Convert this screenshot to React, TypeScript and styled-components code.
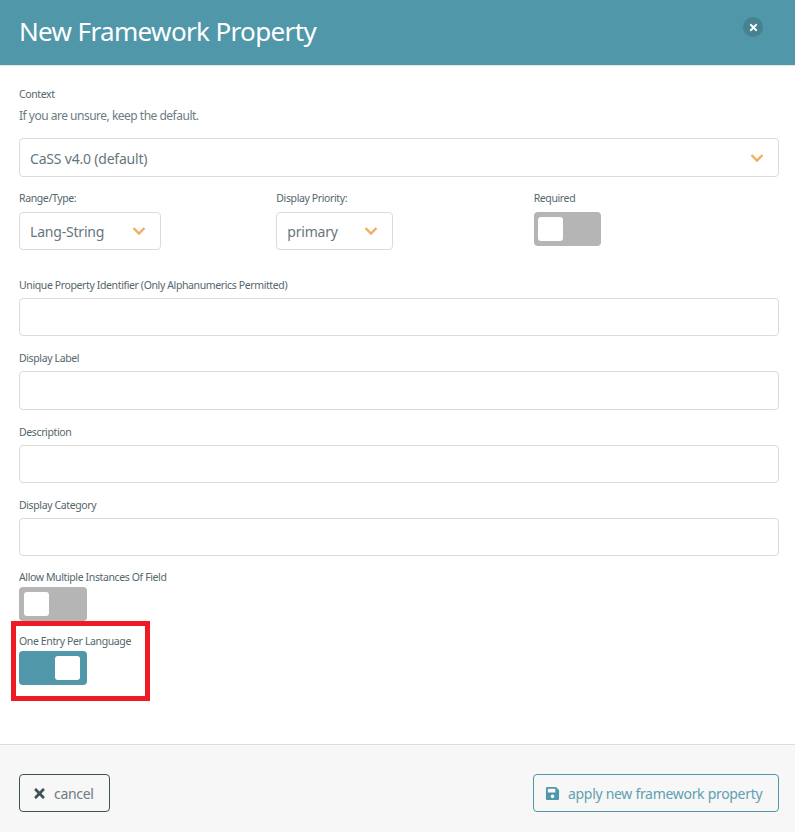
import styled, { createGlobalStyle } from 'styled-components'
import { FaTimes, FaSave } from 'react-icons/fa'

const GlobalStyle = createGlobalStyle`
  html, body {
    margin: 0;
    padding: 0;
    background: #ffffff;
  }
  * {
    box-sizing: border-box;
  }
`

const Chevron = () => (
  <ChevronIcon viewBox="0 0 14 10" aria-hidden="true">
    <polyline points="1.5,2 7,7.5 12.5,2" />
  </ChevronIcon>
)

const Toggle = ({ on = false }: { on?: boolean }) => (
  <Switch $on={on}>
    <Knob />
  </Switch>
)

const textFields = [
  'Unique Property Identifier (Only Alphanumerics Permitted)',
  'Display Label',
  'Description',
  'Display Category',
]

export default function App() {
  return (
    <Modal>
      <GlobalStyle />
      <Header>
        <Title>New Framework Property</Title>
        <CloseButton>
          <FaTimes />
        </CloseButton>
      </Header>
      <Body>
        <Label>Context</Label>
        <Help>If you are unsure, keep the default.</Help>
        <WideSelect>
          <span>CaSS v4.0 (default)</span>
          <Chevron />
        </WideSelect>
        <Columns>
          <div>
            <Label>Range/Type:</Label>
            <Select $width={142}>
              <span>Lang-String</span>
              <Chevron />
            </Select>
          </div>
          <div>
            <Label>Display Priority:</Label>
            <Select $width={117}>
              <span>primary</span>
              <Chevron />
            </Select>
          </div>
          <div>
            <Label>Required</Label>
            <Toggle />
          </div>
        </Columns>
        {textFields.map((name) => (
          <Field key={name}>
            <Label>{name}</Label>
            <Input />
          </Field>
        ))}
        <Toggles>
          <ToggleField>
            <Label>Allow Multiple Instances Of Field</Label>
            <Toggle />
          </ToggleField>
          <ToggleField>
            <Label>One Entry Per Language</Label>
            <Toggle on />
            <Highlight />
          </ToggleField>
        </Toggles>
      </Body>
      <Footer>
        <CancelButton>
          <FaTimes />
          <span>cancel</span>
        </CancelButton>
        <ApplyButton>
          <FaSave />
          <span>apply new framework property</span>
        </ApplyButton>
      </Footer>
    </Modal>
  )
}

const Modal = styled.div`
  width: 795px;
  height: 832px;
  display: flex;
  flex-direction: column;
  overflow: hidden;
  font-family: 'Noto Sans', 'Open Sans', sans-serif;
  color: #55666c;
  background: #ffffff;
`

const Header = styled.header`
  height: 66px;
  flex: none;
  display: flex;
  align-items: flex-start;
  justify-content: space-between;
  padding: 0 32px 0 19px;
  background: #5097a9;
  border-bottom: 1px solid #e4e8e9;
`

const Title = styled.h1`
  margin: 13px 0 0;
  font-size: 26px;
  line-height: 36px;
  font-weight: 400;
  letter-spacing: -0.64px;
  color: #ffffff;
`

const CloseButton = styled.div`
  width: 20px;
  height: 20px;
  margin-top: 17px;
  display: flex;
  align-items: center;
  justify-content: center;
  border-radius: 50%;
  background: #46828f;
  color: #ffffff;
  font-size: 11px;
`

const Body = styled.main`
  flex: 1;
  padding: 20px 16px 0 19px;
`

const Label = styled.label`
  display: block;
  height: 16px;
  margin-bottom: 5px;
  font-size: 10.5px;
  line-height: 16px;
  letter-spacing: -0.38px;
  white-space: nowrap;
  color: #55666c;
`

const Help = styled.p`
  height: 18px;
  margin: 0 0 13px;
  font-size: 12px;
  line-height: 18px;
  letter-spacing: -0.5px;
  color: #6d7c82;
`

const Select = styled.div<{ $width: number }>`
  display: inline-flex;
  align-items: center;
  justify-content: space-between;
  width: ${(p) => p.$width}px;
  height: 38px;
  padding: 0 14px 0 10px;
  background: #ffffff;
  border: 1px solid #dbdbdb;
  border-radius: 4px;
  font-size: 14px;
  letter-spacing: -0.2px;
  color: #66767c;
`

const WideSelect = styled(Select).attrs({ $width: 760 })`
  display: flex;
  height: 39px;
  padding-top: 1px;
`

const ChevronIcon = styled.svg`
  width: 14px;
  height: 10px;
  flex: none;

  polyline {
    fill: none;
    stroke: #f0ad5f;
    stroke-width: 2.4;
  }
`

const Columns = styled.div`
  display: grid;
  grid-template-columns: repeat(3, 1fr);
  column-gap: 12px;
  margin-top: 13px;
  height: 87px;

  ${Label} {
    margin-bottom: 6px;
  }
`

const Switch = styled.div<{ $on: boolean }>`
  width: 67.67px;
  height: 34px;
  display: flex;
  align-items: center;
  justify-content: ${(p) => (p.$on ? 'flex-end' : 'flex-start')};
  padding: 0 7px 0 4.5px;
  border-radius: 4px;
  background: ${(p) => (p.$on ? '#5097a9' : '#b5b5b5')};
`

const Knob = styled.span`
  width: 25px;
  height: 24px;
  border-radius: 3px;
  background: #ffffff;
`

const Field = styled.div`
  margin-bottom: 14px;
`

const Input = styled.div`
  height: 38.33px;
  background: #ffffff;
  border: 1px solid #dbdbdb;
  border-radius: 4px;
`

const Toggles = styled.div`
  margin-top: -1px;
`

const ToggleField = styled.div`
  position: relative;
  margin-bottom: 12px;

  ${Label} {
    margin-bottom: 2px;
  }
`

const Highlight = styled.div`
  position: absolute;
  left: -8px;
  top: -12px;
  width: 139px;
  height: 80px;
  border: 5px solid #ed1c24;
  pointer-events: none;
`

const Footer = styled.footer`
  height: 88px;
  flex: none;
  display: flex;
  align-items: flex-start;
  justify-content: space-between;
  padding: 29px 16px 0 19px;
  background: #f7f7f7;
  border-top: 1px solid #dcdcdc;
`

const FooterButton = styled.div`
  height: 38px;
  display: flex;
  align-items: center;
  border-radius: 4px;
  background: transparent;
  font-size: 14px;
  letter-spacing: -0.3px;
  white-space: nowrap;
`

const CancelButton = styled(FooterButton)`
  width: 91px;
  padding-left: 12px;
  gap: 7px;
  border: 1px solid #3f5258;
  color: #6d7c82;

  svg {
    font-size: 15px;
    color: #3f5258;
  }
`

const ApplyButton = styled(FooterButton)`
  width: 246px;
  padding-left: 11px;
  gap: 8px;
  border: 1px solid #5097a9;
  color: #5f9fb0;

  svg {
    font-size: 15px;
    color: #5097a9;
  }
`
